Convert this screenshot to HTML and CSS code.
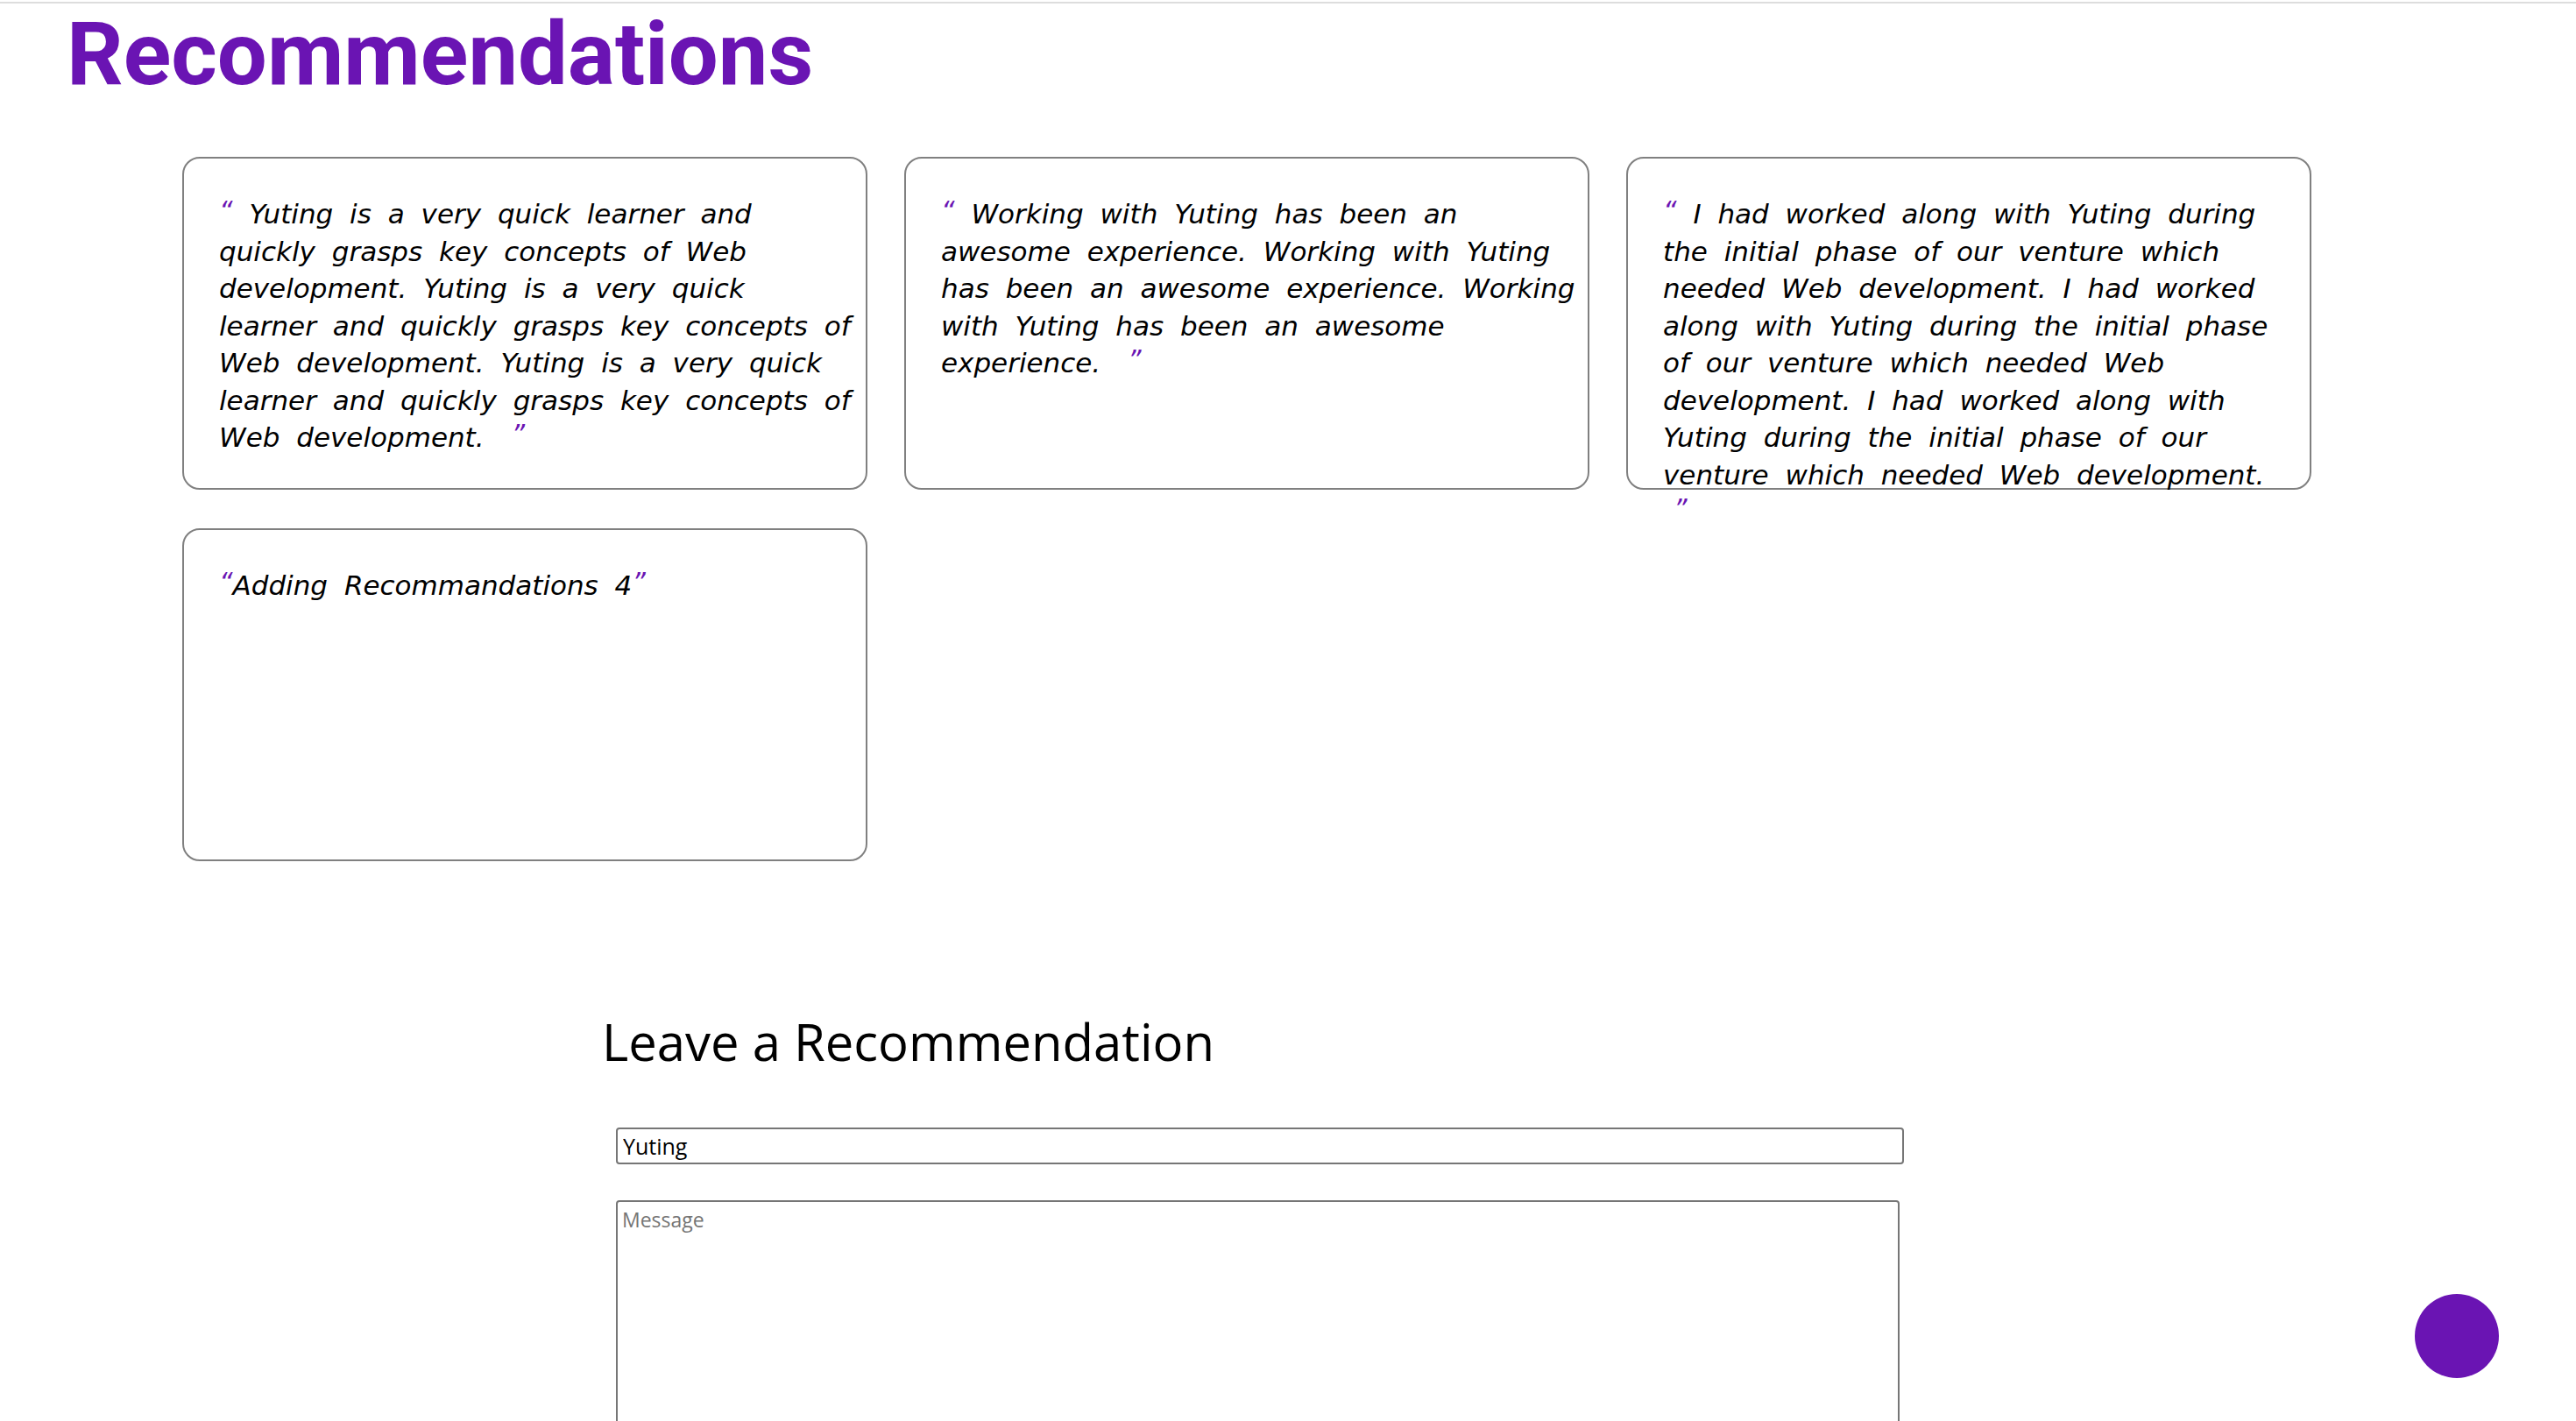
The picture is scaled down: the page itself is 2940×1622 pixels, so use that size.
FILE: index.html
```html
<!DOCTYPE html>
<html lang="en">
<head>
<meta charset="utf-8">
<title>Recommendations</title>
<link rel="stylesheet" href="styles.css">
</head>
<body>
<div class="topline"></div>
<section class="recs">
  <h1 class="recs-title">Recommendations</h1>
  <div class="cards">
    <div class="card"><span class="q">&#8220;</span> Yuting is a very quick learner and quickly grasps key concepts of Web development. Yuting is a very quick learner and quickly grasps key concepts of Web development. Yuting is a very quick learner and quickly grasps key concepts of Web development. <span class="q q-close">&#8221;</span></div>
    <div class="card"><span class="q">&#8220;</span> Working with Yuting has been an awesome experience. Working with Yuting has been an awesome experience. Working with Yuting has been an awesome experience. <span class="q q-close">&#8221;</span></div>
    <div class="card"><span class="q">&#8220;</span> I had worked along with Yuting during the initial phase of our venture which needed Web development. I had worked along with Yuting during the initial phase of our venture which needed Web development. I had worked along with Yuting during the initial phase of our venture which needed Web development. <span class="q q-close">&#8221;</span></div>
    <div class="card"><span class="q">&#8220;</span>Adding Recommandations 4<span class="q">&#8221;</span></div>
  </div>
</section>
<section class="leave">
  <h2 class="leave-title">Leave a Recommendation</h2>
  <form class="leave-form">
    <input class="field" type="text" value="Yuting">
    <textarea class="field area" placeholder="Message"></textarea>
  </form>
</section>
<button class="fab" type="button" aria-label="Back to top"></button>
</body>
</html>
```
FILE: styles.css
```css
html, body {
  margin: 0;
  padding: 0;
  background: #ffffff;
}
body {
  font-family: "Open Sans", "Noto Sans", sans-serif;
  color: #000;
  overflow: hidden;
  height: 1622px;
}
.topline {
  margin-top: 2px;
  height: 2px;
  background: #dddddd;
}
.recs-title {
  margin: 8px 0 0 76px;
  font-family: Roboto, "Open Sans", sans-serif;
  font-size: 101px;
  line-height: 100px;
  font-weight: 700;
  color: #6a14b3;
}
.cards {
  margin-top: 67px;
  padding-left: 208px;
  width: 2432px;
  display: flex;
  flex-wrap: wrap;
  column-gap: 42px;
  row-gap: 44px;
}
.card {
  box-sizing: border-box;
  width: 782px;
  height: 380px;
  border: 2px solid #808080;
  border-radius: 20px;
  padding: 42px 12px 40px 40px;
  font-family: "DejaVu Sans", "Open Sans", sans-serif;
  font-style: italic;
  font-size: 31px;
  line-height: 42.5px;
  word-spacing: 9px;
}
.q {
  color: #6a14b3;
  font-size: 30px;
  line-height: 1;
  vertical-align: text-top;
  word-spacing: 0;
}
.q-close {
  margin-left: 12px;
}
.leave {
  margin-top: 166px;
  padding-left: 687px;
}
.leave-title {
  margin: 0;
  font-size: 58px;
  line-height: 80px;
  font-weight: 400;
}
.leave-form {
  margin-top: 58px;
  display: flex;
  flex-direction: column;
  align-items: flex-start;
  padding-left: 16px;
  gap: 41px;
}
.field {
  box-sizing: border-box;
  font-family: "Open Sans", "Noto Sans", sans-serif;
  font-size: 25px;
  border: 2px solid #767676;
  border-radius: 4px;
  margin: 0;
  padding: 0 6px;
  color: #000;
}
input.field {
  width: 1470px;
  height: 42px;
}
.area {
  width: 1465px;
  height: 300px;
  padding: 4px 5px;
  font-size: 23px;
  resize: vertical;
}
.area::placeholder {
  color: #757575;
}
.fab {
  position: fixed;
  right: 88px;
  bottom: 49px;
  width: 96px;
  height: 96px;
  border-radius: 50%;
  border: none;
  padding: 0;
  background: #6a14b3;
}
```
